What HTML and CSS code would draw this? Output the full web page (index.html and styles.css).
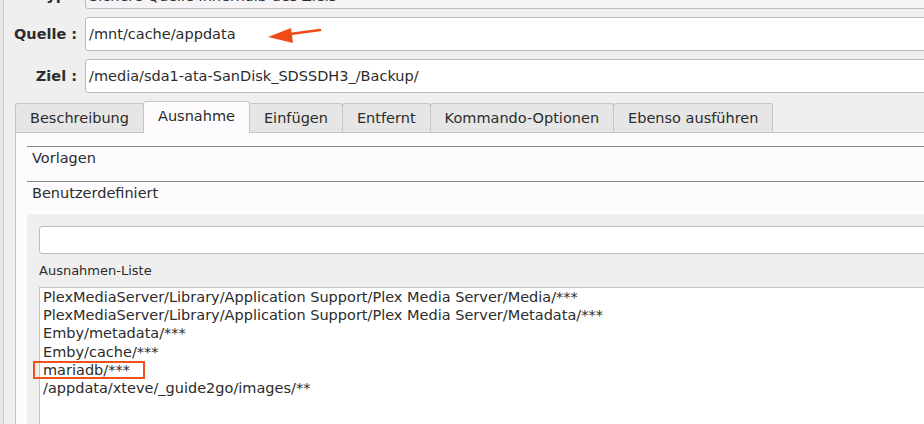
FILE: index.html
```html
<!DOCTYPE html>
<html lang="de">
<head>
    <meta charset="UTF-8">
    <title>Backup-Job</title>
    <link rel="stylesheet" href="styles.css">
</head>
<body>
<div class="window">

    <!-- Quelle / Ziel -->
    <div class="form">
        <label class="label label-cut">Typ :</label>
        <div class="field field-cut">Sichere Quelle innerhalb des Ziels</div>

        <label class="label">Quelle :</label>
        <div class="field">/mnt/cache/appdata
            <svg class="arrow" width="56" height="20" viewBox="0 0 56 20">
                <path d="M54 5 L24 9" stroke="#f04b16" stroke-width="2.6" stroke-linecap="round" fill="none"/>
                <path d="M2 12 L25 3 L27 18 Z" fill="#f04b16"/>
            </svg>
        </div>

        <label class="label">Ziel :</label>
        <div class="field">/media/sda1-ata-SanDisk_SDSSDH3_/Backup/</div>
    </div>

    <!-- Tabs -->
    <div class="tabs">
        <div class="tab">Beschreibung</div>
        <div class="tab active">Ausnahme</div>
        <div class="tab">Einfügen</div>
        <div class="tab">Entfernt</div>
        <div class="tab">Kommando-Optionen</div>
        <div class="tab">Ebenso ausführen</div>
    </div>

    <div class="panel">
        <div class="section">Vorlagen</div>
        <div class="section">Benutzerdefiniert</div>

        <div class="group">
            <div class="entry"></div>
            <div class="list-title">Ausnahmen-Liste</div>
            <div class="list">
                <div class="item">PlexMediaServer/Library/Application Support/Plex Media Server/Media/***</div>
                <div class="item">PlexMediaServer/Library/Application Support/Plex Media Server/Metadata/***</div>
                <div class="item">Emby/metadata/***</div>
                <div class="item">Emby/cache/***</div>
                <div class="item"><span class="marked">mariadb/***</span></div>
                <div class="item">/appdata/xteve/_guide2go/images/**</div>
            </div>
        </div>
    </div>

</div>
</body>
</html>
```

FILE: styles.css
```css
html, body {
    margin: 0;
    height: 100%;
    overflow: hidden;
}

body {
    font-family: "DejaVu Sans", sans-serif;
    font-size: 14.5px;
    color: #2c2c2c;
    background-color: #e8e8e8;
    width: 1000px;
}

.window {
    display: flow-root;
    margin-left: 3px;
    height: 100%;
    border-left: 1px solid #cfcfcf;
    background-color: #efefef;
    padding-left: 10px;
}

/* form rows */
.form {
    display: grid;
    grid-template-columns: 63px 1fr;
    column-gap: 8px;
    row-gap: 8px;
    margin-top: -25px;
}

.label {
    font-weight: bold;
    text-align: right;
    line-height: 34px;
    white-space: nowrap;
}

.field {
    position: relative;
    height: 32px;
    line-height: 32px;
    padding-left: 3px;
    background-color: #fff;
    border: 1px solid #bcbcbc;
    border-radius: 3px;
    white-space: nowrap;
}

/* the row above is cut by the window edge */
.label-cut,
.field-cut {
    line-height: 40px;
    overflow: hidden;
}

.label-cut {
    height: 34px;
}

.field-cut {
    background-color: #f6f3f6;
}

.arrow {
    position: absolute;
    left: 180px;
    top: 7px;
}

/* tabs */
.tabs {
    display: flex;
    align-items: flex-end;
    margin-top: 8px;
    margin-left: 1px;
    height: 31px;
}

.tab {
    height: 28px;
    line-height: 28px;
    padding: 0 14px;
    background-color: #e6e6e6;
    border: 1px solid #c6c6c6;
    border-bottom: none;
    border-radius: 3px 3px 0 0;
    margin-right: -1px;
}

.tab.active {
    height: 31px;
    line-height: 29px;
    background-color: #fdfbfd;
    position: relative;
    z-index: 1;
    margin-bottom: -1px;
}

.panel {
    margin-left: 1px;
    height: 400px;
    background-color: #fdfbfd;
    border-left: 1px solid #c6c6c6;
    border-top: 1px solid #c6c6c6;
    padding-left: 11px;
    padding-top: 13px;
}

.section {
    border-top: 1px solid #8a8a8a;
    height: 34px;
    line-height: 23px;
    padding-left: 5px;
}

.group {
    margin-top: -2px;
    background-color: #efefef;
    padding: 12px 0 0 12px;
    height: 300px;
}

.entry {
    height: 26px;
    background-color: #fff;
    border: 1px solid #bcbcbc;
    border-radius: 3px;
}

.list-title {
    font-size: 13px;
    margin: 8px 0 0;
    height: 25px;
    line-height: 18px;
}

.list {
    background-color: #fff;
    border-top: 1px solid #c4c4c4;
    border-left: 1px solid #c4c4c4;
    padding: 0 0 0 3px;
    height: 200px;
}

.item {
    height: 18.2px;
    line-height: 18px;
    white-space: nowrap;
}

.marked {
    position: relative;
}

.marked::after {
    content: "";
    position: absolute;
    left: -10px;
    right: -15px;
    top: -1px;
    bottom: -1px;
    border: 2px solid #f0521e;
}
```
